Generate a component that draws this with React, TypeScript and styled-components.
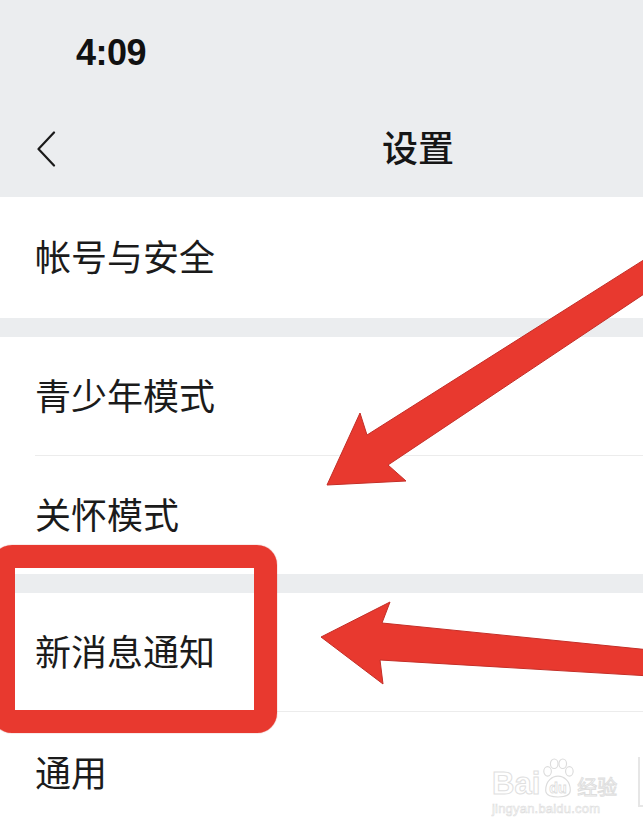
import styled, { createGlobalStyle } from 'styled-components';

const GlobalStyle = createGlobalStyle`
    html, body {
        margin: 0;
        padding: 0;
        background: #ffffff;
    }
    #root {
        width: 643px;
        height: 829px;
    }
`;

const Page = styled.div`
    position: relative;
    width: 643px;
    height: 829px;
    overflow: hidden;
    background: #ffffff;
    font-family: 'Noto Sans CJK SC', 'Noto Sans', sans-serif;
`;

const Header = styled.header`
    background: #ebedef;
    height: 197px;
    display: flex;
    flex-direction: column;
`;

const StatusBar = styled.div`
    height: 106px;
    display: flex;
    align-items: center;
    padding-left: 76px;
    box-sizing: border-box;
`;

const Time = styled.span`
    font-family: 'Liberation Sans', Arial, sans-serif;
    font-weight: 700;
    font-size: 36px;
    line-height: 1;
    color: #111111;
    letter-spacing: -0.5px;
`;

const NavBar = styled.div`
    flex: 1;
    display: flex;
    align-items: center;
    padding-left: 36px;
    padding-bottom: 12px;
`;

const BackButton = styled.button`
    border: 0;
    padding: 0;
    margin-top: 6px;
    background: transparent;
    width: 20px;
    height: 36px;
    display: flex;
`;

const Title = styled.h1`
    margin: 0 0 0 326px;
    font-size: 36px;
    font-weight: 500;
    line-height: 1;
    color: #161616;
`;

const Group = styled.section`
    background: #ffffff;
    display: flex;
    flex-direction: column;
`;

const Row = styled.div<{ $h: number }>`
    height: ${({ $h }) => $h}px;
    box-sizing: border-box;
    display: flex;
    align-items: center;
    padding: 0 0 5px 35px;
    font-size: 36px;
    line-height: 1;
    color: #1b1b1b;
`;

const Divider = styled.div`
    height: 1px;
    margin-left: 35px;
    background: #ececec;
`;

const Gap = styled.div`
    height: 19px;
    background: #ebedef;
`;

const Overlay = styled.svg`
    position: absolute;
    left: 0;
    top: 0;
    width: 643px;
    height: 829px;
    pointer-events: none;
`;

const Highlight = styled.div`
    position: absolute;
    left: -8px;
    top: 545px;
    width: 285px;
    height: 188px;
    box-sizing: border-box;
    border: 23px solid #e8392f;
    border-radius: 20px;
    box-shadow: 0 0 1px #c22c24;
`;

const Watermark = styled.div`
    position: absolute;
    left: 492px;
    top: 757px;
    width: 140px;
    display: flex;
    flex-direction: column;
    align-items: flex-start;
    white-space: nowrap;
    pointer-events: none;
`;

const MarkTop = styled.div`
    display: flex;
    align-items: flex-end;
    height: 42px;
`;

const MarkWord = styled.span<{ $size: number }>`
    font-family: 'Liberation Sans', Arial, sans-serif;
    font-weight: 700;
    font-size: ${({ $size }) => $size}px;
    line-height: 1;
    color: #ffffff;
    -webkit-text-stroke: 1px #e0e0e0;
`;

const MarkCn = styled.span`
    font-size: 20px;
    line-height: 1;
    color: #ffffff;
    -webkit-text-stroke: 1px #dedede;
    margin: 0 0 2px 1px;
`;

const MarkUrl = styled.span`
    font-family: 'Liberation Sans', Arial, sans-serif;
    font-size: 13px;
    line-height: 1;
    margin-top: 3px;
    color: #ffffff;
    -webkit-text-stroke: 0.6px #dddddd;
    letter-spacing: 0.2px;
`;

const EdgeMark = styled.div`
    position: absolute;
    right: 0;
    top: 757px;
    width: 3px;
    height: 48px;
    border-left: 2px solid #e6e6e6;
    border-bottom: 2px solid #e6e6e6;
`;

const ChevronLeft = () => (
    <svg width="20" height="36" viewBox="0 0 20 36" fill="none">
        <path d="M18 1.5 L2.5 18 L18 34.5" stroke="#1a1a1a" strokeWidth="2.2" strokeLinecap="round" strokeLinejoin="round" />
    </svg>
);

const Paw = () => (
    <svg width="36" height="42" viewBox="0 0 38 42" fill="#ffffff" stroke="#dcdcdc" strokeWidth="1.2">
        <ellipse cx="8" cy="14" rx="4" ry="5" />
        <ellipse cx="15" cy="6" rx="4" ry="5" />
        <ellipse cx="24" cy="6" rx="4" ry="5" />
        <ellipse cx="31" cy="14" rx="4" ry="5" />
        <path d="M6 34 C6 24 13 19 19 19 C25 19 32 24 32 34 C32 40 25 41 19 41 C13 41 6 40 6 34 Z" />
        <text x="19" y="37" textAnchor="middle" fontFamily="Liberation Sans, Arial, sans-serif" fontWeight="700" fontSize="15" fill="#ffffff" stroke="#dcdcdc" strokeWidth="0.8">du</text>
    </svg>
);

const ITEMS_TOP = ['帐号与安全'];
const ITEMS_MID = ['青少年模式', '关怀模式'];
const ITEMS_BOTTOM = ['新消息通知', '通用'];

export default function App() {
    return (
        <Page>
            <GlobalStyle />
            <Header>
                <StatusBar>
                    <Time>4:09</Time>
                </StatusBar>
                <NavBar>
                    <BackButton aria-label="返回">
                        <ChevronLeft />
                    </BackButton>
                    <Title>设置</Title>
                </NavBar>
            </Header>

            <Group>
                {ITEMS_TOP.map((label) => (
                    <Row key={label} $h={121}>{label}</Row>
                ))}
            </Group>
            <Gap />
            <Group>
                <Row $h={118}>{ITEMS_MID[0]}</Row>
                <Divider />
                <Row $h={118}>{ITEMS_MID[1]}</Row>
            </Group>
            <Gap />
            <Group>
                <Row $h={118}>{ITEMS_BOTTOM[0]}</Row>
                <Divider />
                <Row $h={122}>{ITEMS_BOTTOM[1]}</Row>
            </Group>

            <Highlight />
            <Overlay viewBox="0 0 643 829">
                <polygon
                    points="327,485 406,481 388,465 650,290 650,256 367,435 360,413"
                    fill="#e8392f"
                    stroke="#c42e27"
                    strokeWidth="1"
                    strokeLinejoin="round"
                />
                <polygon
                    points="321,637 390,602 382,623 650,650 650,676 380,660 383,684"
                    fill="#e8392f"
                    stroke="#c42e27"
                    strokeWidth="1"
                    strokeLinejoin="round"
                />
            </Overlay>

            <Watermark>
                <MarkTop>
                    <MarkWord $size={31}>Bai</MarkWord>
                    <Paw />
                    <MarkCn>经验</MarkCn>
                </MarkTop>
                <MarkUrl>jingyan.baidu.com</MarkUrl>
            </Watermark>
            <EdgeMark />
        </Page>
    );
}
